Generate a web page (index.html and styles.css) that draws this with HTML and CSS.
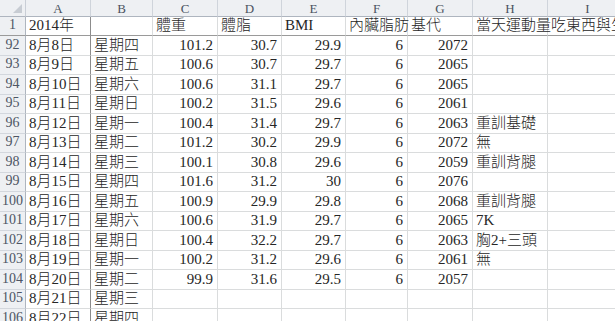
FILE: index.html
```html
<!DOCTYPE html>
<html>
<head>
<meta charset="utf-8">
<link rel="stylesheet" href="styles.css">
</head>
<body>
<div class="sheet">
  <div class="corner"><span class="tri"></span></div>
  <div class="hd">A</div><div class="hd">B</div><div class="hd">C</div><div class="hd">D</div><div class="hd">E</div><div class="hd">F</div><div class="hd">G</div><div class="hd">H</div><div class="hd">I</div>

  <div class="rh fr">1</div><div class="c fa fr">2014年</div><div class="c fr"></div><div class="c fr">體重</div><div class="c fr">體脂</div><div class="c fr">BMI</div><div class="c fr">內臟脂肪</div><div class="c fr">基代</div><div class="c fr">當天運動量</div><div class="c fr">吃東西與生活</div>

  <div class="rh">92</div><div class="c fa">8月8日</div><div class="c">星期四</div><div class="c n">101.2</div><div class="c n">30.7</div><div class="c n">29.9</div><div class="c n">6</div><div class="c n">2072</div><div class="c"></div><div class="c"></div>
  <div class="rh">93</div><div class="c fa">8月9日</div><div class="c">星期五</div><div class="c n">100.6</div><div class="c n">30.7</div><div class="c n">29.7</div><div class="c n">6</div><div class="c n">2065</div><div class="c"></div><div class="c"></div>
  <div class="rh">94</div><div class="c fa">8月10日</div><div class="c">星期六</div><div class="c n">100.6</div><div class="c n">31.1</div><div class="c n">29.7</div><div class="c n">6</div><div class="c n">2065</div><div class="c"></div><div class="c"></div>
  <div class="rh">95</div><div class="c fa">8月11日</div><div class="c">星期日</div><div class="c n">100.2</div><div class="c n">31.5</div><div class="c n">29.6</div><div class="c n">6</div><div class="c n">2061</div><div class="c"></div><div class="c"></div>
  <div class="rh">96</div><div class="c fa">8月12日</div><div class="c">星期一</div><div class="c n">100.4</div><div class="c n">31.4</div><div class="c n">29.7</div><div class="c n">6</div><div class="c n">2063</div><div class="c">重訓基礎</div><div class="c"></div>
  <div class="rh">97</div><div class="c fa">8月13日</div><div class="c">星期二</div><div class="c n">101.2</div><div class="c n">30.2</div><div class="c n">29.9</div><div class="c n">6</div><div class="c n">2072</div><div class="c">無</div><div class="c"></div>
  <div class="rh">98</div><div class="c fa">8月14日</div><div class="c">星期三</div><div class="c n">100.1</div><div class="c n">30.8</div><div class="c n">29.6</div><div class="c n">6</div><div class="c n">2059</div><div class="c">重訓背腿</div><div class="c"></div>
  <div class="rh">99</div><div class="c fa">8月15日</div><div class="c">星期四</div><div class="c n">101.6</div><div class="c n">31.2</div><div class="c n">30</div><div class="c n">6</div><div class="c n">2076</div><div class="c"></div><div class="c"></div>
  <div class="rh">100</div><div class="c fa">8月16日</div><div class="c">星期五</div><div class="c n">100.9</div><div class="c n">29.9</div><div class="c n">29.8</div><div class="c n">6</div><div class="c n">2068</div><div class="c">重訓背腿</div><div class="c"></div>
  <div class="rh">101</div><div class="c fa">8月17日</div><div class="c">星期六</div><div class="c n">100.6</div><div class="c n">31.9</div><div class="c n">29.7</div><div class="c n">6</div><div class="c n">2065</div><div class="c">7K</div><div class="c"></div>
  <div class="rh">102</div><div class="c fa">8月18日</div><div class="c">星期日</div><div class="c n">100.4</div><div class="c n">32.2</div><div class="c n">29.7</div><div class="c n">6</div><div class="c n">2063</div><div class="c">胸2+三頭</div><div class="c"></div>
  <div class="rh">103</div><div class="c fa">8月19日</div><div class="c">星期一</div><div class="c n">100.2</div><div class="c n">31.2</div><div class="c n">29.6</div><div class="c n">6</div><div class="c n">2061</div><div class="c">無</div><div class="c"></div>
  <div class="rh">104</div><div class="c fa">8月20日</div><div class="c">星期二</div><div class="c n">99.9</div><div class="c n">31.6</div><div class="c n">29.5</div><div class="c n">6</div><div class="c n">2057</div><div class="c"></div><div class="c"></div>
  <div class="rh">105</div><div class="c fa">8月21日</div><div class="c">星期三</div><div class="c"></div><div class="c"></div><div class="c"></div><div class="c"></div><div class="c"></div><div class="c"></div><div class="c"></div>
  <div class="rh">106</div><div class="c fa">8月22日</div><div class="c">星期四</div><div class="c"></div><div class="c"></div><div class="c"></div><div class="c"></div><div class="c"></div><div class="c"></div><div class="c"></div>
</div>
</body>
</html>
```

FILE: styles.css
```css
html, body {
  margin: 0;
  padding: 0;
  background: #ffffff;
  overflow: hidden;
}

.sheet {
  display: grid;
  grid-template-columns: 26px 65px 62px 65px 64px 64px 62px 65px 75px 80px;
  grid-template-rows: 17px 19px repeat(15, 19.5px);
  width: 628px;
  font-family: "Liberation Serif", "Noto Sans CJK TC", serif;
  font-size: 15px;
  font-weight: 300;
  color: #262626;
}

.corner {
  position: relative;
  background: #eef0f3;
  border-right: 1px solid #c9ced6;
  border-bottom: 1px solid #aeb5bf;
  box-sizing: border-box;
}

.tri {
  position: absolute;
  right: 3px;
  bottom: 3px;
  width: 0;
  height: 0;
  border-left: 9px solid transparent;
  border-bottom: 9px solid #c7ccd3;
}

.hd {
  display: flex;
  align-items: center;
  justify-content: center;
  background: #eef0f3;
  border-right: 1px solid #cfd4db;
  border-bottom: 1px solid #aeb5bf;
  box-sizing: border-box;
  font-size: 13px;
  color: #4a5260;
  padding-top: 1px;
}

.rh {
  display: flex;
  align-items: flex-end;
  justify-content: center;
  background: #eef0f3;
  border-right: 1px solid #aeb5bf;
  border-bottom: 1px solid #d3d7dd;
  box-sizing: border-box;
  font-size: 14px;
  color: #4d5564;
  padding-bottom: 2px;
}

.c {
  display: flex;
  align-items: flex-end;
  padding: 0 3px 1px 3px;
  box-sizing: border-box;
  border-right: 1px solid #dadcdd;
  border-bottom: 1px solid #dadcdd;
  white-space: nowrap;
  overflow: visible;
  min-width: 0;
}

.n {
  justify-content: flex-end;
  padding-right: 4px;
}

.fa {
  border-right: 1px solid #8c8c8c;
}

.fr {
  border-bottom: 1px solid #9a9a9a;
}
```
